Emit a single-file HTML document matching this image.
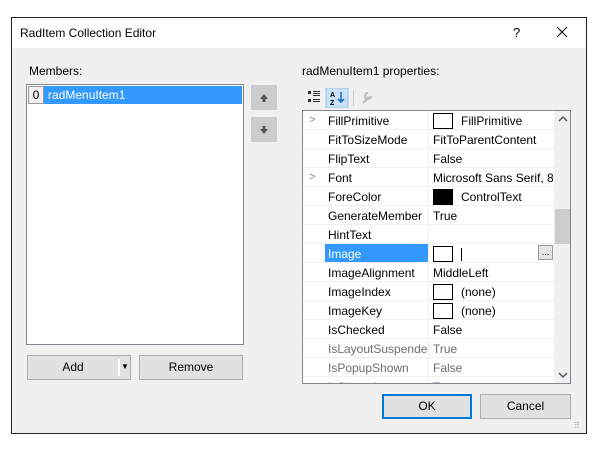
<!DOCTYPE html>
<html><head><style>
*{box-sizing:border-box;margin:0;padding:0}
body{width:601px;height:455px;background:#fff;position:relative;font-family:"Liberation Sans",sans-serif;font-size:12px;color:#000;overflow:hidden}
.a{position:absolute}
.dlg{left:11px;top:17px;width:576px;height:417px;border:1px solid #222;background:#f0f0f0}
.title{left:12px;top:18px;width:574px;height:30px;background:#fff}
.btn{position:absolute;background:#e1e1e1;border:1px solid #adadad;text-align:center;line-height:22px}
.row{position:absolute;left:0;width:251px;height:19px;border-bottom:1px solid #f0f0f0}
.row .n{position:absolute;left:22px;top:0;width:104px;height:18px;line-height:20px;padding-left:3px;border-right:1px solid #f0f0f0}
.row .v{position:absolute;left:127px;top:0;width:124px;height:18px;line-height:20px;padding-left:3px}
.sw{display:inline-block;width:20px;height:16px;border:1px solid #000;background:#fff;vertical-align:middle;margin:-2px 8px 0 0}
.chev{position:absolute;left:6px;top:3px;color:#888;font-size:11px}
.g{color:#6d6d6d}
</style></head><body>
<div class="a dlg"></div>
<div class="a title"></div>
<div class="a" style="left:20px;top:26px;font-size:12px">RadItem Collection Editor</div>
<div class="a" style="left:513px;top:25px;font-size:13px">?</div>
<svg class="a" style="left:556px;top:26px" width="12" height="12"><path d="M1 1L11 11M11 1L1 11" stroke="#000" stroke-width="1"/></svg>

<div class="a" style="left:29px;top:64px">Members:</div>
<div class="a" style="left:26px;top:84px;width:218px;height:261px;background:#fff;border:1px solid #828790"></div>
<div class="a" style="left:44px;top:86px;width:198px;height:18px;background:#3399ff;color:#fff;line-height:19px;padding-left:4px;font-size:12px">radMenuItem1</div>
<div class="a" style="left:28px;top:86px;width:16px;height:18px;background:#f0f0f0;border:1px solid #999;text-align:center;line-height:17px">0</div>
<div class="a" style="left:251px;top:85px;width:26px;height:25px;background:#cccccc"></div>
<svg class="a" style="left:258px;top:92px" width="12" height="12"><path d="M6 2L2 7H4.5V10H7.5V7H10Z" fill="#555"/></svg>
<div class="a" style="left:251px;top:117px;width:26px;height:25px;background:#cccccc"></div>
<svg class="a" style="left:258px;top:124px" width="12" height="12"><path d="M6 10L2 5H4.5V2H7.5V5H10Z" fill="#555"/></svg>

<div class="btn" style="left:27px;top:355px;width:104px;height:25px">
<span style="position:absolute;left:0;width:90px;text-align:center;line-height:23px">Add</span>
<span style="position:absolute;left:90px;top:3px;width:2px;height:17px;background:#fff"></span>
<span style="position:absolute;left:93px;top:0;font-size:8px">▼</span></div>
<div class="btn" style="left:139px;top:355px;width:104px;height:25px;line-height:23px">Remove</div>

<div class="a" style="left:302px;top:64px">radMenuItem1 properties:</div>
<svg class="a" style="left:306px;top:88px" width="80" height="20">
<g fill="#333"><rect x="2" y="3" width="3" height="3"/><rect x="2" y="11" width="3" height="3"/><rect x="7" y="3" width="7" height="1"/><rect x="7" y="5" width="7" height="1"/><rect x="7" y="7" width="7" height="1"/><rect x="7" y="11" width="7" height="1"/><rect x="7" y="13" width="7" height="1"/></g>
<rect x="20" y="0" width="22" height="20" fill="#c9e0f7" stroke="#99c4ee"/>
<text x="24" y="9" font-size="7" font-family="Liberation Sans" font-weight="bold">A</text><text x="24" y="17" font-size="7" font-family="Liberation Sans" font-weight="bold">Z</text>
<path d="M35 4v10M32 11l3 3 3-3" stroke="#1e6fc2" stroke-width="1.6" fill="none"/>
<rect x="47" y="2" width="1" height="16" fill="#ccc"/>
<path d="M57 15l6-6M62 5a3 3 0 1 0 3 3" stroke="#bbb" stroke-width="2" fill="none"/>
</svg>
<div class="a" style="left:302px;top:110px;width:269px;height:274px;border:1px solid #828790;background:#fff;overflow:hidden">
<div class="a" style="left:251px;top:0;width:17px;height:274px;background:#f0f0f0"></div>
<div class="a" style="left:252px;top:98px;width:15px;height:35px;background:#cdcdcd"></div>
<svg class="a" style="left:255px;top:4px" width="10" height="8"><path d="M1 6L5 2L9 6" stroke="#555" stroke-width="1.5" fill="none"/></svg>
<svg class="a" style="left:255px;top:260px" width="10" height="8"><path d="M1 2L5 6L9 2" stroke="#555" stroke-width="1.5" fill="none"/></svg>
<div class="row" style="top:0"><span class="chev">&gt;</span><div class="n">FillPrimitive</div><div class="v"><span class="sw"></span>FillPrimitive</div></div>
<div class="row" style="top:19px"><div class="n">FitToSizeMode</div><div class="v">FitToParentContent</div></div>
<div class="row" style="top:38px"><div class="n">FlipText</div><div class="v">False</div></div>
<div class="row" style="top:57px"><span class="chev">&gt;</span><div class="n">Font</div><div class="v" style="white-space:nowrap;overflow:hidden">Microsoft Sans Serif, 8.2</div></div>
<div class="row" style="top:76px"><div class="n">ForeColor</div><div class="v"><span class="sw" style="background:#000"></span>ControlText</div></div>
<div class="row" style="top:95px"><div class="n">GenerateMember</div><div class="v">True</div></div>
<div class="row" style="top:114px"><div class="n">HintText</div><div class="v"></div></div>
<div class="row" style="top:133px"><div class="n" style="background:#3399ff;color:#fff">Image</div><div class="v"><span class="sw"></span><span style="display:inline-block;width:1px;height:13px;background:#000;vertical-align:middle"></span>
<span style="position:absolute;left:108px;top:1px;width:15px;height:15px;border:1px solid #999;background:#e5e5e5;font-size:9px;line-height:12px;text-align:center">...</span></div></div>
<div class="row" style="top:152px"><div class="n">ImageAlignment</div><div class="v">MiddleLeft</div></div>
<div class="row" style="top:171px"><div class="n">ImageIndex</div><div class="v"><span class="sw"></span>(none)</div></div>
<div class="row" style="top:190px"><div class="n">ImageKey</div><div class="v"><span class="sw"></span>(none)</div></div>
<div class="row" style="top:209px"><div class="n">IsChecked</div><div class="v">False</div></div>
<div class="row" style="top:228px"><div class="n g" style="white-space:nowrap;overflow:hidden">IsLayoutSuspended</div><div class="v g">True</div></div>
<div class="row" style="top:247px"><div class="n g">IsPopupShown</div><div class="v g">False</div></div>
<div class="row" style="top:266px"><div class="n g">IsShared</div><div class="v g">True</div></div>
</div>

<div class="btn" style="left:382px;top:394px;width:90px;height:25px;border:2px solid #0078d7;line-height:21px">OK</div>
<div class="btn" style="left:480px;top:394px;width:91px;height:25px;line-height:23px">Cancel</div>
<div class="a" style="left:574px;top:421px;font-size:8px;color:#aaa">⠿</div>
</body></html>
